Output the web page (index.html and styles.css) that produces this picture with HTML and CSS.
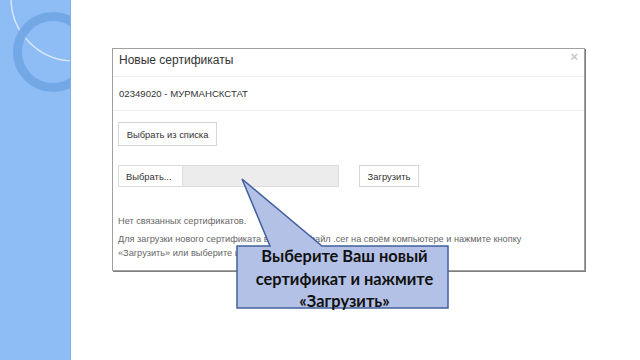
FILE: index.html
```html
<!DOCTYPE html>
<html lang="ru">
<head>
<meta charset="utf-8">
<title>Новые сертификаты</title>
<link rel="stylesheet" href="styles.css">
</head>
<body>
<div class="page">
  <aside class="side">
    <svg class="side-art" width="70" height="110" viewBox="0 0 70 110">
      <circle cx="74" cy="-2" r="63" fill="none" stroke="#e6f1fd" stroke-width="1.4" opacity="0.85"/>
      <circle cx="53" cy="52" r="35.5" fill="none" stroke="#70a5e6" stroke-width="9" opacity="0.9"/>
    </svg>
  </aside>
  <main class="main">
    <section class="dialog">
      <header class="dlg-head">
        <h1 class="dlg-title">Новые сертификаты</h1>
        <span class="dlg-close">×</span>
      </header>
      <div class="dlg-org">02349020 - МУРМАНСКСТАТ</div>
      <div class="dlg-body">
        <button class="btn btn-list">Выбрать из списка</button>
        <div class="file-row">
          <div class="file-pick">
            <span class="file-btn">Выбрать...</span>
            <span class="file-name"></span>
          </div>
          <button class="btn btn-upload">Загрузить</button>
        </div>
        <p class="note note-empty">Нет связанных сертификатов.</p>
        <p class="note">Для загрузки нового сертификата выберите файл .cer на своём компьютере и нажмите кнопку<br>«Загрузить» или выберите из списка.</p>
      </div>
    </section>
  </main>
  <div class="callout">
    <svg class="callout-shape" width="230" height="145" viewBox="0 0 230 145">
      <path d="M7,76 L40,76 L12,9 L92,76 L218,76 L218,138 L7,138 Z" fill="#b4c1e6" stroke="#42609f" stroke-width="1.5" stroke-linejoin="miter"/>
    </svg>
    <div class="callout-text">Выберите Ваш новый<br>сертификат и нажмите<br>«Загрузить»</div>
  </div>
</div>
</body>
</html>
```

FILE: styles.css
```css
* { box-sizing: border-box; }
html, body { margin: 0; padding: 0; background: #ffffff; }
body { font-family: "Liberation Sans", Arial, sans-serif; }

.page {
  position: relative;
  display: flex;
  width: 640px;
  height: 360px;
  overflow: hidden;
}

.side {
  position: relative;
  width: 71px;
  flex: none;
  background: #8ebdf6;
  border-right: 1px solid #7fb0ec;
  overflow: hidden;
}
.side-art { display: block; }

.main {
  flex: 1;
  padding: 48px 0 0 41px;
}

.dialog {
  width: 473px;
  height: 223px;
  border: 1px solid #a0a0a0;
  box-shadow: 1px 1px 0 #808080;
  background: #fff;
  display: flex;
  flex-direction: column;
}

.dlg-head {
  height: 28px;
  display: flex;
  align-items: flex-start;
  justify-content: space-between;
  padding: 3px 6px 0 6px;
  border-bottom: 1px solid #efefef;
}
.dlg-title {
  margin: 0;
  font-size: 12px;
  line-height: 16px;
  font-weight: normal;
  color: #333;
}
.dlg-close {
  margin-top: -1px;
  font-size: 13px;
  line-height: 12px;
  font-weight: bold;
  color: #c8c8c8;
}

.dlg-org {
  height: 34px;
  display: flex;
  align-items: center;
  padding: 0 6px;
  font-size: 9.6px;
  color: #333;
  border-bottom: 1px solid #efefef;
}

.dlg-body {
  padding: 11px 5px 0 5px;
}

.btn {
  font-family: "Liberation Sans", Arial, sans-serif;
  font-size: 9.4px;
  color: #333;
  background: #fff;
  border: 1px solid #d6d6d6;
  border-radius: 0;
  margin: 0;
  padding: 0;
  height: 24px;
  white-space: nowrap;
}
.btn-list { width: 99px; display: block; }

.file-row {
  margin-top: 19px;
  display: flex;
  gap: 20px;
  align-items: stretch;
}
.file-pick {
  display: flex;
  width: 221px;
  height: 22px;
  border: 1px solid #dcdcdc;
}
.file-btn {
  width: 64px;
  display: flex;
  align-items: center;
  padding-left: 7px;
  font-size: 9.4px;
  color: #333;
  background: #fff;
  border-right: 1px solid #dcdcdc;
}
.file-name {
  flex: 1;
  background: #ececec;
}
.btn-upload { width: 60px; height: 22px; }

.note {
  margin: 0;
  font-size: 9.2px;
  line-height: 14px;
  color: #666;
}
.note-empty { margin-top: 27px; margin-bottom: 4px; }

.callout {
  position: absolute;
  left: 230px;
  top: 170px;
  width: 230px;
  height: 145px;
}
.callout-shape { position: absolute; left: 0; top: 0; }
.callout-text {
  position: absolute;
  left: 9px;
  top: 75px;
  width: 211px;
  height: 62px;
  text-align: center;
  font-family: Lato, "Open Sans", sans-serif;
  font-weight: bold;
  font-size: 16.4px;
  line-height: 22.5px;
  color: #111;
}
```
